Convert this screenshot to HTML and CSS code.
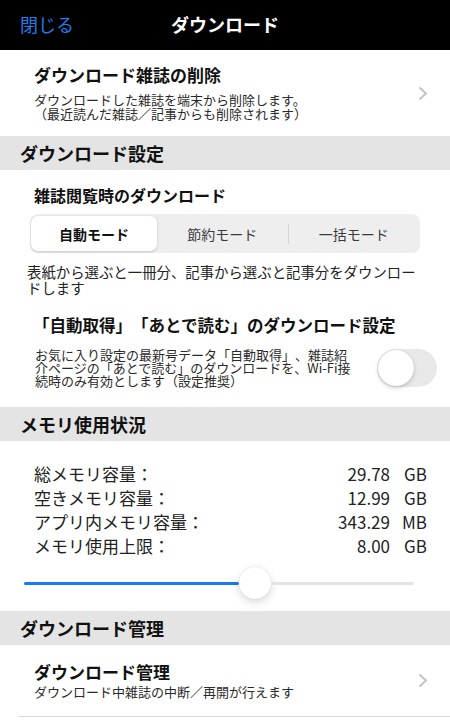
FILE: index.html
```html
<!DOCTYPE html>
<html lang="ja">
<head>
<meta charset="utf-8">
<link rel="stylesheet" href="styles.css">
</head>
<body>
<div class="app">
  <header class="navbar">
    <span class="nav-close">閉じる</span>
    <span class="nav-title">ダウンロード</span>
  </header>

  <div class="link-row">
    <div class="link-text">
      <div class="link-title">ダウンロード雑誌の削除</div>
      <div class="link-sub">ダウンロードした雑誌を端末から削除します。（最近読んだ雑誌／記事からも削除されます）</div>
    </div>
    <svg class="chevron" width="10" height="15" viewBox="0 0 10 15"><path d="M1.5 1.5 L8 7.5 L1.5 13.5" fill="none" stroke="#c4c4c7" stroke-width="2"/></svg>
  </div>

  <div class="section-head">ダウンロード設定</div>

  <div class="settings">
    <div class="set-title">雑誌閲覧時のダウンロード</div>
    <div class="segmented">
      <div class="seg seg-active">自動モード</div>
      <div class="seg">節約モード</div>
      <div class="seg-sep"></div>
      <div class="seg">一括モード</div>
    </div>
    <p class="set-desc">表紙から選ぶと一冊分、記事から選ぶと記事分をダウンロードします</p>
    <div class="set-title2">「自動取得」「あとで読む」のダウンロード設定</div>
    <div class="toggle-row">
      <p class="toggle-desc">お気に入り設定の最新号データ「自動取得」、雑誌紹介ページの「あとで読む」のダウンロードを、Wi-Fi接続時のみ有効とします（設定推奨）</p>
      <div class="toggle"><div class="knob"></div></div>
    </div>
  </div>

  <div class="section-head">メモリ使用状況</div>

  <div class="memory">
    <div class="mem-grid">
      <span class="mem-label">総メモリ容量：</span><span class="mem-num">29.78</span><span class="mem-unit">GB</span>
      <span class="mem-label">空きメモリ容量：</span><span class="mem-num">12.99</span><span class="mem-unit">GB</span>
      <span class="mem-label">アプリ内メモリ容量：</span><span class="mem-num">343.29</span><span class="mem-unit">MB</span>
      <span class="mem-label">メモリ使用上限：</span><span class="mem-num">8.00</span><span class="mem-unit">GB</span>
    </div>
    <div class="slider">
      <div class="track-fill"></div>
      <div class="thumb"></div>
      <div class="track-rest"></div>
    </div>
  </div>

  <div class="section-head">ダウンロード管理</div>

  <div class="link-row link-row2">
    <div class="link-text">
      <div class="link-title">ダウンロード管理</div>
      <div class="link-sub2">ダウンロード中雑誌の中断／再開が行えます</div>
    </div>
    <svg class="chevron" width="10" height="15" viewBox="0 0 10 15"><path d="M1.5 1.5 L8 7.5 L1.5 13.5" fill="none" stroke="#c4c4c7" stroke-width="2"/></svg>
  </div>
</div>
</body>
</html>
```

FILE: styles.css
```css
* { box-sizing: border-box; }
html, body { margin: 0; padding: 0; background: #fff; }
body {
  font-family: "Noto Sans CJK JP", "Noto Sans", "Liberation Sans", sans-serif;
  color: #111;
  width: 450px;
  overflow: hidden;
  text-spacing-trim: space-all;
}
.app { width: 450px; }

.navbar {
  height: 50px;
  background: #000;
  display: flex;
  align-items: center;
  justify-content: center;
  position: relative;
}
.nav-close {
  position: absolute;
  left: 20px;
  top: 12px;
  color: #1b7ef2;
  font-size: 18px;
  line-height: 24px;
}
.nav-title {
  color: #fff;
  font-size: 18px;
  font-weight: 700;
  line-height: 24px;
  margin-top: -2px;
}

.link-row {
  height: 86px;
  display: flex;
  align-items: center;
  padding-left: 34px;
  padding-right: 22px;
}
.link-text { flex: 1; }
.link-title {
  font-size: 17px;
  font-weight: 700;
  line-height: 20px;
  color: #111;
}
.link-sub {
  margin-top: 8px;
  width: 278px;
  font-size: 13px;
  line-height: 14px;
  color: #2a2a2a;
}
.chevron { flex: none; display: block; }

.link-row2 {
  height: 72px;
  border-bottom: 1px solid #d6d6d6;
  margin-left: 19px;
  padding-left: 15px;
}
.link-sub2 {
  margin-top: 2px;
  font-size: 13px;
  line-height: 16px;
  color: #2a2a2a;
}

.section-head {
  height: 34px;
  background: #e4e4e4;
  padding-left: 20px;
  font-size: 18px;
  font-weight: 700;
  line-height: 34px;
  color: #111;
}

.settings {
  padding: 15px 0 20px 0;
}
.set-title {
  padding-left: 34px;
  font-size: 16px;
  font-weight: 700;
  line-height: 20px;
}
.segmented {
  margin: 9px 30px 0 30px;
  height: 39px;
  background: #eeeeef;
  border-radius: 8px;
  display: flex;
  align-items: center;
  padding: 2px 1px;
}
.seg {
  flex: 1;
  height: 35px;
  display: flex;
  align-items: center;
  justify-content: center;
  font-size: 14px;
  color: #3a3a3a;
}
.seg-active {
  flex: none;
  width: 126px;
  background: #fff;
  border-radius: 7px;
  box-shadow: 0 1px 3px rgba(0,0,0,0.18);
  font-weight: 700;
  color: #111;
}
.seg-sep {
  width: 1px;
  height: 20px;
  background: #d5d5d8;
}
.set-desc {
  margin: 11px 25px 0 27px;
  font-size: 14.4px;
  line-height: 16px;
  color: #222;
}
.set-title2 {
  margin-top: 19px;
  padding-left: 33px;
  font-size: 16.5px;
  font-weight: 700;
  line-height: 20px;
}
.toggle-row {
  margin-top: 13px;
  display: flex;
  align-items: center;
  padding-left: 35px;
  padding-right: 13px;
}
.toggle-desc {
  margin: 0;
  width: 318px;
  font-size: 13px;
  line-height: 13px;
  color: #2a2a2a;
}
.toggle {
  margin-left: auto;
  width: 60px;
  height: 38px;
  border-radius: 19px;
  background: #e9e9ea;
  position: relative;
}
.knob {
  position: absolute;
  left: 1px;
  top: 1px;
  width: 36px;
  height: 36px;
  border-radius: 50%;
  background: #fff;
  box-shadow: 0 2px 4px rgba(0,0,0,0.18), 0 0 1px rgba(0,0,0,0.2);
}

.memory {
  padding: 21px 0 12px 0;
}
.mem-grid {
  display: grid;
  grid-template-columns: 1fr auto 37px;
  padding-left: 34px;
  padding-right: 23px;
  font-size: 17px;
  line-height: 24px;
  color: #222;
}
.mem-num { text-align: right; }
.mem-unit { text-align: right; }
.slider {
  margin: 9px 36px 0 24px;
  height: 32px;
  display: flex;
  align-items: center;
}
.track-fill {
  width: 215px;
  height: 3px;
  background: #1a7af3;
  border-radius: 2px;
}
.thumb {
  flex: none;
  width: 32px;
  height: 32px;
  border-radius: 50%;
  background: #fff;
  box-shadow: 0 3px 8px rgba(0,0,0,0.16), 0 0 1px rgba(0,0,0,0.15);
}
.track-rest {
  flex: 1;
  height: 3px;
  background: #e4e4e6;
  border-radius: 2px;
}
```
